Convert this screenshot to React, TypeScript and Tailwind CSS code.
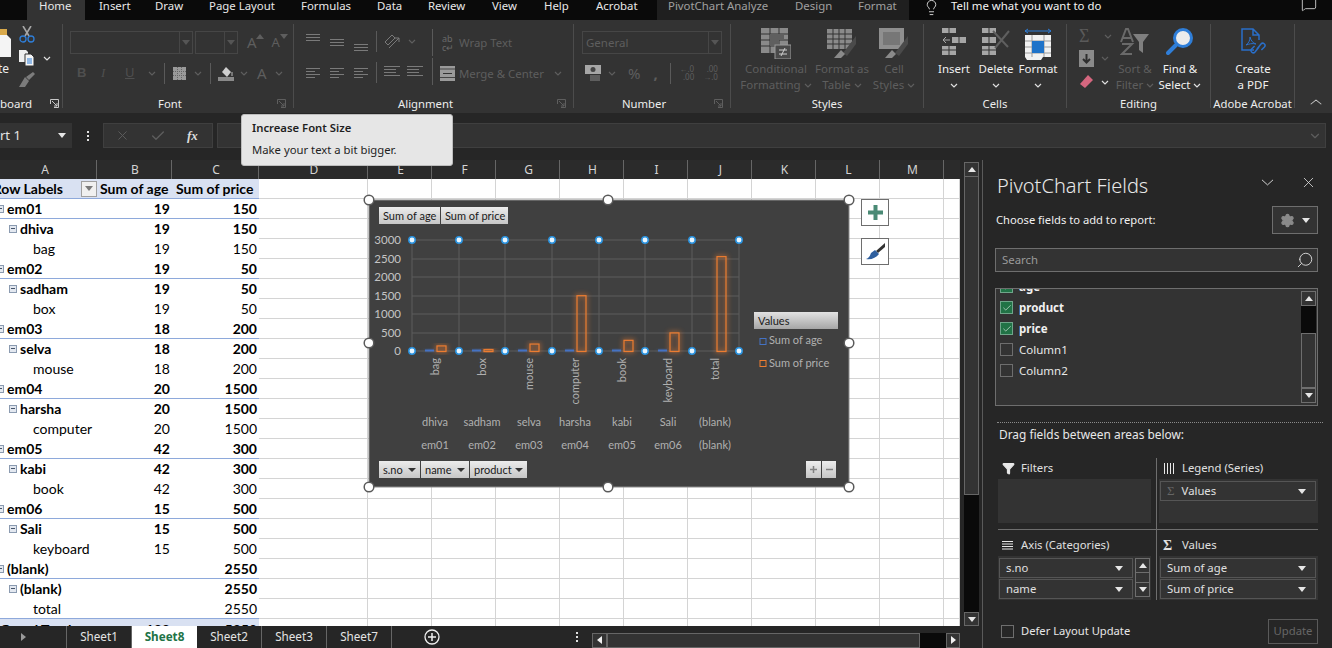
import React from "react";
import { Settings, Search, X, ChevronDown, ChevronUp, Check, Funnel, MessageSquare, Lightbulb } from "lucide-react";

const UI = "font-['Noto_Sans',sans-serif]";
const CELL = "font-['Lato',sans-serif]";
const OFF = "#5e5e5e";
const ICON = "#7a7a7a";

const Chev = ({ c = OFF, className = "" }: { c?: string; className?: string }) => (
  <svg width="8" height="5" viewBox="0 0 8 5" className={className}>
    <path d="M1 1l3 3 3-3" fill="none" stroke={c} strokeWidth="1.2" />
  </svg>
);

const Tri = ({ c = "#e6e6e6", up = false, className = "" }: { c?: string; up?: boolean; className?: string }) => (
  <svg width="8" height="5" viewBox="0 0 8 5" className={className}>
    <path d={up ? "M0 5L4 0l4 5z" : "M0 0l4 5 4-5z"} fill={c} />
  </svg>
);

const Launcher = ({ c = OFF }: { c?: string }) => (
  <svg width="9" height="9" viewBox="0 0 9 9">
    <path d="M.5 5V.5H8.5V8.5H4M2 2l5 5M7 4v3H4" fill="none" stroke={c} strokeWidth="1" />
  </svg>
);

const Lines = ({ widths, w = 14, gap = 3 }: { widths: number[]; w?: number; gap?: number }) => (
  <svg width={w} height={widths.length * gap + 1}>
    {widths.map((x, i) => (
      <rect key={i} x={0} y={i * gap} width={x} height="1" fill={ICON} />
    ))}
  </svg>
);

const Sep = ({ h = 21, className = "" }: { h?: number; className?: string }) => (
  <div className={`w-px bg-[#5a5a5a] ${className}`} style={{ height: h }} />
);

const Group = ({
  w,
  label,
  launcher,
  children,
  border = true,
}: {
  w: number;
  label: string;
  launcher?: boolean;
  children: React.ReactNode;
  border?: boolean;
}) => (
  <div className={`h-[84px] flex flex-col shrink-0 ${border ? "border-r border-[#4c4c4c]" : ""}`} style={{ width: w }}>
    <div className="h-[72px] relative">{children}</div>
    <div className="h-[12px] flex items-start">
      <div className="flex-1 text-center text-[11.3px] leading-[16px] text-[#ededed] whitespace-nowrap">{label}</div>
      {launcher && (
        <div className="w-[16px] pt-[3px]">
          <Launcher />
        </div>
      )}
    </div>
  </div>
);

const Big = ({
  w,
  icon,
  lines,
  on = false,
  chev = false,
  chevBelow = false,
}: {
  w: number;
  icon: React.ReactNode;
  lines: string[];
  on?: boolean;
  chev?: boolean;
  chevBelow?: boolean;
}) => (
  <div className="flex flex-col items-center pt-[4px] shrink-0" style={{ width: w }}>
    <div className="h-[33px] flex items-start justify-center">{icon}</div>
    {lines.map((l, i) => (
      <div
        key={l}
        className={`text-[11.5px] leading-[16px] whitespace-nowrap flex items-center gap-[3px] ${on ? "text-[#f0f0f0]" : "text-[#5e5e5e]"}`}
      >
        {l}
        {chev && i === lines.length - 1 && <Chev c={on ? "#e0e0e0" : OFF} />}
      </div>
    ))}
    {chevBelow && (
      <div className="h-[16px] flex items-center">
        <Chev c="#e0e0e0" />
      </div>
    )}
  </div>
);

const CondIcon = () => (
  <svg width="30" height="31" viewBox="0 0 30 31">
    <rect x="0" y="0" width="27" height="25" fill="#8a8a8a" />
    <path d="M0 6h27M0 12h27M0 18h27M9 0v25M18 0v25" stroke="#333" />
    <rect x="9" y="6" width="14" height="6" fill="#5f5f5f" />
    <rect x="9" y="12" width="9" height="6" fill="#5f5f5f" />
    <rect x="14" y="17" width="16" height="14" fill="#4a4a4a" stroke="#9a9a9a" />
    <path d="M18 22h8M18 26h8M24 20l-4 8" stroke="#cfcfcf" />
  </svg>
);

const TableIcon = () => (
  <svg width="30" height="30" viewBox="0 0 30 30">
    <rect x="0" y="1" width="25" height="20" fill="#8a8a8a" />
    <path d="M0 6h25M0 11h25M0 16h25M6 1v20M12 1v20M18 1v20" stroke="#333" />
    <path d="M29 8v8l-9 12-4-3z" fill="#4a4a4a" />
    <path d="M14 22l4 4-4 4h-7z" fill="#8a8a8a" />
  </svg>
);

const CellIcon = () => (
  <svg width="30" height="30" viewBox="0 0 30 30">
    <rect x="0" y="0" width="25" height="21" fill="#8f8f8f" />
    <rect x="4" y="4" width="17" height="13" fill="#777" />
    <path d="M29 8v8l-9 12-4-3z" fill="#4a4a4a" />
    <path d="M13 22l4 4-4 4h-7z" fill="#8a8a8a" />
  </svg>
);

const InsertIcon = () => (
  <svg width="26" height="27" viewBox="0 0 26 27">
    <path d="M1 0h14v5H1zM11 9h14v6H11zM1 18h14v9H1z" fill="#a6a6a6" />
    <path d="M8 0v5M18 9v6M8 18v9M1 22h14" stroke="#333" />
    <path d="M2 12h7M2 12l3-3M2 12l3 3" stroke="#a6a6a6" fill="none" />
  </svg>
);

const DeleteIcon = () => (
  <svg width="30" height="27" viewBox="0 0 30 27">
    <path d="M1 0h14v5H1zM1 9h14v6H1zM1 18h14v9H1z" fill="#a6a6a6" />
    <path d="M8 0v5M8 9v6M8 18v9M1 22h14" stroke="#333" />
    <path d="M12 3l15 16M28 3L14 20" stroke="#5f5f5f" strokeWidth="2" />
  </svg>
);

const FormatIcon = () => (
  <svg width="28" height="33" viewBox="0 0 28 33">
    <path d="M1 3h26M1 3l3-2M1 3l3 2M27 3l-3-2M27 3l-3 2" stroke="#2f7ed8" fill="none" />
    <rect x="1" y="7" width="26" height="22" fill="#f2f2f2" />
    <path d="M1 13h26M1 19h26M1 25h26M8 7v22M20 7v22" stroke="#9a9a9a" />
    <rect x="8" y="13" width="12" height="12" fill="#1f73c9" />
    <path d="M1 29h18l-2 3H3z" fill="#f2f2f2" />
  </svg>
);

const SortIcon = () => (
  <svg width="30" height="28" viewBox="0 0 30 28">
    <path d="M1 14L6 1h2l5 13M3 10h8" stroke="#6a6a6a" strokeWidth="2" fill="none" />
    <path d="M2 16h10L2 26h10" stroke="#6a6a6a" strokeWidth="2" fill="none" />
    <path d="M13 6h16l-6 8v11l-4-3v-8z" fill="#7f7f7f" />
  </svg>
);

const FindIcon = () => (
  <svg width="28" height="28" viewBox="0 0 28 28">
    <circle cx="17" cy="10" r="8.5" fill="#ececec" stroke="#2f7ed8" strokeWidth="3" />
    <path d="M10 17L2 25" stroke="#2f7ed8" strokeWidth="4" strokeLinecap="round" />
  </svg>
);

const PdfIcon = () => (
  <svg width="26" height="28" viewBox="0 0 26 28" fill="none" stroke="#2a6fc9" strokeWidth="1.5">
    <path d="M14 22H2V1h11l6 6v5M13 1v6h6" />
    <path d="M6 17c3-2 4-5 4-8 1 4 3 6 6 7-4-1-7 0-10 1z" strokeWidth="1" />
    <path d="M17 21l4-5a2.2 2.2 0 0 1 3.4 3l-3 3M19 19l-4 5a2.2 2.2 0 0 1-3.4-3l3-3" />
  </svg>
);

const tabs: [string, number][] = [
  ["Insert", 56],
  ["Draw", 54],
  ["Page Layout", 92],
  ["Formulas", 76],
  ["Data", 51],
  ["Review", 64],
  ["View", 52],
  ["Help", 52],
  ["Acrobat", 60],
];

const TabStrip = () => (
  <div className="h-[20px] bg-[#0a0a0a] flex text-[11.4px] leading-[12px] text-[#e8e8e8] overflow-hidden shrink-0">
    <div className="w-[27px]" />
    <div className="w-[58px] h-[20px] bg-[#333333] pl-[12px]">Home</div>
    <div className="w-[14px]" />
    {tabs.map(([t, w]) => (
      <div key={t} className="whitespace-nowrap" style={{ width: w }}>
        {t}
      </div>
    ))}
    <div className="w-[1px]" />
    <div className="w-[252px] bg-[#1f1f1f] flex text-[#a0a0a0] pl-[11px]">
      <span className="w-[127px] whitespace-nowrap">PivotChart Analyze</span>
      <span className="w-[63px]">Design</span>
      <span>Format</span>
    </div>
    <div className="pl-[14px] pr-[11px]">
      <Lightbulb size={17} strokeWidth={1.2} color="#f0f0f0" className="-mt-[1px]" />
    </div>
    <span className="whitespace-nowrap text-[#f4f4f4]">Tell me what you want to do</span>
    <div className="ml-auto pr-[15px]">
      <MessageSquare size={16} strokeWidth={1.2} color="#e8e8e8" className="-mt-[4px]" />
    </div>
  </div>
);

const Ribbon = () => (
  <div className={`h-[93px] bg-[#333333] pt-[4px] flex shrink-0 overflow-hidden`}>
    {/* clipboard */}
    <Group w={63} label="">
      <div className="flex h-full">
        <div className="w-[19px] overflow-hidden text-[12px] text-[#ededed]">
          <svg width="11" height="30" viewBox="0 0 11 30" className="mt-[5px] block">
            <rect x="0" y="0" width="7" height="7" fill="#d9a94a" />
            <path d="M0 6h7l4 4v18H0z" fill="#f4f4f4" />
          </svg>
          <div className="-ml-[17px] leading-[16px] mt-[2px] text-right w-[26px]">te</div>
        </div>
        <div className="flex flex-col pt-[2px]">
          <svg width="16" height="17" viewBox="0 0 16 17">
            <path d="M4 0l6 10M12 0L6 10" stroke="#a6a6a6" strokeWidth="1.6" />
            <circle cx="4" cy="13" r="3" fill="none" stroke="#2f7ed8" strokeWidth="1.3" />
            <circle cx="12" cy="13" r="3" fill="none" stroke="#2f7ed8" strokeWidth="1.3" />
          </svg>
          <div className="flex items-center gap-[8px] mt-[7px]">
            <svg width="16" height="16" viewBox="0 0 16 16">
              <path d="M0 0h7l2 2v10H0z" fill="#efefef" />
              <path d="M6 4h6l3 3v9H6z" fill="#f4f4f4" stroke="#333" />
              <path d="M8 9h5M8 11h5M8 13h5" stroke="#2f7ed8" />
            </svg>
            <Chev c="#e0e0e0" />
          </div>
          <svg width="16" height="15" viewBox="0 0 16 15" className="mt-[6px]">
            <path d="M16 2l-2-2-7 5 3 3zM6 5l4 4-4 6H0z" fill="#7c7c7c" />
          </svg>
        </div>
      </div>
      <div className="absolute left-0 top-[72px] text-[11.5px] leading-[16px] text-[#ededed]">board</div>
      <div className="absolute left-[50px] top-[75px]">
        <Launcher c="#c8c8c8" />
      </div>
    </Group>

    {/* font */}
    <Group w={231} label="Font" launcher>
      <div className="flex items-center mt-[7px] h-[23px] ml-[7px]">
        <div className="w-[123px] h-[23px] border border-[#464646] flex justify-end">
          <div className="w-[13px] border-l border-[#464646] flex items-center justify-center">
            <Tri c="#555" />
          </div>
        </div>
        <div className="w-[43px] h-[23px] ml-[2px] border border-[#464646] flex justify-end">
          <div className="w-[13px] border-l border-[#464646] flex items-center justify-center">
            <Tri c="#555" />
          </div>
        </div>
        <span className="ml-[9px] text-[15px] text-[#5e5e5e]">A</span>
        <Tri c="#5e5e5e" up className="-mt-[13px] -ml-[1px]" />
        <span className="ml-[8px] text-[13px] text-[#5e5e5e]">A</span>
        <Tri c="#5e5e5e" className="-mt-[13px]" />
      </div>
      <div className="flex items-center h-[22px] mt-[8px] ml-[14px] text-[13px] text-[#4f4f4f]">
        <b className="w-[24px] font-['Liberation_Sans',sans-serif]">B</b>
        <i className="w-[24px] font-['Liberation_Serif',serif]">I</i>
        <u className="w-[23px]">U</u>
        <Chev />
        <Sep className="ml-[8px]" />
        <svg width="13" height="13" className="ml-[8px]">
          <rect width="13" height="13" fill="#9a9a9a" />
          <path d="M0 4.5h13M0 8.5h13M4.5 0v13M8.5 0v13" stroke="#666" strokeDasharray="1 1" />
        </svg>
        <Chev className="ml-[8px]" />
        <Sep className="ml-[8px]" />
        <svg width="16" height="16" viewBox="0 0 16 16" className="ml-[7px]">
          <path d="M4 7l4-5 5 5-4 5z" fill="#cfcfcf" />
          <path d="M14 7v4" stroke="#777" strokeWidth="2" />
          <rect y="12" width="16" height="4" fill="#8a8a8a" />
        </svg>
        <Chev className="ml-[6px]" />
        <span className="ml-[9px] text-[#5e5e5e] text-[15px]">A</span>
        <Chev className="ml-[8px]" />
      </div>
    </Group>

    {/* alignment */}
    <Group w={280} label="Alignment" launcher>
      <div className="flex h-[66px]">
        <div className="flex flex-col ml-[12px] w-[64px]">
          <div className="flex gap-[10px] mt-[10px] h-[22px]">
            <Lines widths={[14, 14, 14]} />
            <div className="mt-[5px]">
              <Lines widths={[14, 14, 14]} />
            </div>
            <div className="mt-[10px]">
              <Lines widths={[14, 14, 14]} />
            </div>
          </div>
          <div className="flex gap-[10px] mt-[12px]">
            <Lines widths={[14, 9, 14, 9]} />
            <Lines widths={[14, 9, 14, 9]} />
            <Lines widths={[14, 9, 14, 9]} />
          </div>
        </div>
        <div className="flex flex-col ml-[6px] w-[56px]">
          <div className="flex items-center gap-[7px] mt-[7px] h-[21px]">
            <Sep />
            <svg width="17" height="16" viewBox="0 0 17 16" fill="none" stroke={ICON}>
              <path d="M1 8l7-7 3 3-7 7zM5 14L15 4M15 4h-4M15 4v4" />
            </svg>
            <Chev />
          </div>
          <div className="flex items-center gap-[7px] mt-[10px] h-[21px]">
            <Sep />
            <Lines widths={[16, 12, 12, 16]} w={16} />
            <Lines widths={[16, 12, 12, 16]} w={16} />
          </div>
        </div>
        <div className="flex flex-col text-[11.4px] text-[#5e5e5e]">
          <div className="flex items-center h-[21px] mt-[8px]">
            <Sep h={27} />
            <span className="ml-[9px] w-[17px] text-[9px] leading-[9px] text-[#6a6a6a]">
              ab
              <br />c↵
            </span>
            <span className="whitespace-nowrap">Wrap Text</span>
          </div>
          <div className="flex items-center h-[21px] mt-[10px]">
            <Sep h={27} className="-mt-[5px]" />
            <svg width="15" height="15" className="ml-[7px] mr-[4px]">
              <rect width="15" height="15" fill="#9a9a9a" />
              <path d="M0 3h15M0 11.500h15" stroke="#444" />
              <path d="M3 7.500h9" stroke="#333" />
            </svg>
            <span className="whitespace-nowrap">Merge &amp; Center</span>
            <Chev className="ml-[10px]" />
          </div>
        </div>
      </div>
    </Group>

    {/* number */}
    <Group w={157} label="Number" launcher>
      <div className="ml-[8px] mt-[7px] w-[140px] h-[23px] border border-[#464646] flex items-center text-[11.5px] text-[#5e5e5e]">
        <span className="pl-[3px] flex-1">General</span>
        <div className="w-[13px] h-full border-l border-[#464646] flex items-center justify-center">
          <Tri c="#555" />
        </div>
      </div>
      <div className="flex items-center ml-[11px] mt-[8px] h-[22px]">
        <svg width="17" height="16" viewBox="0 0 17 16">
          <rect width="16" height="9" fill="#a6a6a6" />
          <circle cx="8" cy="4.500" r="2.500" fill="#444" />
          <path d="M5 11h10M5 13h10M5 15h10" stroke="#8a8a8a" />
        </svg>
        <Chev className="ml-[6px]" />
        <span className="ml-[12px] text-[15px] text-[#5e5e5e]">%</span>
        <span className="ml-[13px] text-[15px] font-bold text-[#5e5e5e] w-[8px]">,</span>
        <Sep className="ml-[9px]" />
        <span className="ml-[8px] text-[8px] leading-[8px] text-[#5e5e5e] text-right whitespace-nowrap">
          ←.0
          <br />
          .00
        </span>
        <span className="ml-[9px] text-[8px] leading-[8px] text-[#5e5e5e] text-right whitespace-nowrap">
          .00
          <br />→.0
        </span>
      </div>
    </Group>

    {/* styles */}
    <Group w={193} label="Styles">
      <div className="flex ml-[10px]">
        <Big w={70} icon={<CondIcon />} lines={["Conditional", "Formatting"]} chev />
        <Big w={62} icon={<TableIcon />} lines={["Format as", "Table"]} chev />
        <Big w={42} icon={<CellIcon />} lines={["Cell", "Styles"]} chev />
      </div>
    </Group>

    {/* cells */}
    <Group w={143} label="Cells">
      <div className="flex ml-[9px]">
        <Big w={42} on chevBelow icon={<InsertIcon />} lines={["Insert"]} />
        <Big w={42} on chevBelow icon={<DeleteIcon />} lines={["Delete"]} />
        <Big w={42} on chevBelow icon={<FormatIcon />} lines={["Format"]} />
      </div>
    </Group>

    {/* editing */}
    <Group w={144} label="Editing">
      <div className="flex">
        <div className="flex flex-col ml-[12px] w-[33px] pt-[3px]">
          <div className="flex items-center gap-[9px] h-[18px] text-[18px] text-[#5a5a5a] font-['Liberation_Serif',serif]">
            <span className="w-[16px]">Σ</span>
            <Chev />
          </div>
          <div className="flex items-center gap-[7px] mt-[4px] h-[18px]">
            <svg width="15" height="17">
              <rect width="15" height="17" fill="#8a8a8a" />
              <path d="M7.500 4v8M4 9l3.500 3.500L11 9" stroke="#2e2e2e" strokeWidth="2" fill="none" />
            </svg>
            <Chev />
          </div>
          <div className="flex items-center gap-[8px] mt-[7px] h-[16px]">
            <svg width="14" height="14" viewBox="0 0 14 14">
              <path d="M9 0l5 5-8 8-5-4z" fill="#d5677f" />
            </svg>
            <Chev c="#e0e0e0" />
          </div>
        </div>
        <Big w={46} icon={<SortIcon />} lines={["Sort &", "Filter"]} chev />
        <Big w={44} on icon={<FindIcon />} lines={["Find &", "Select"]} chev />
      </div>
    </Group>

    {/* acrobat */}
    <Group w={84} label="Adobe Acrobat">
      <Big w={84} on icon={<PdfIcon />} lines={["Create", "a PDF"]} />
    </Group>
    <div className="flex-1 flex justify-end items-end pb-[2px] pr-[8px] h-[88px]">
      <ChevronUp size={16} strokeWidth={1.2} color="#c8c8c8" className="scale-x-125" />
    </div>
  </div>
);

const FormulaBar = () => (
  <div className="h-[47px] bg-[#262626] pt-[10px] flex shrink-0 text-[12px]">
    <div className="w-[72px] h-[25px] bg-[#333333] flex items-center overflow-hidden text-[#e4e4e4] text-[13px] pr-[6px] justify-between">
      <span className="whitespace-nowrap">rt 1</span>
      <Tri />
    </div>
    <div className="ml-[12px] w-[8px] h-[25px] flex flex-col justify-center items-center gap-[2px]">
      <span className="w-[2px] h-[2px] bg-[#e0e0e0]" />
      <span className="w-[2px] h-[2px] bg-[#e0e0e0]" />
      <span className="w-[2px] h-[2px] bg-[#e0e0e0]" />
    </div>
    <div className="ml-[11px] w-[110px] h-[25px] bg-[#333333] border border-[#3f3f3f] flex items-center">
      <X size={15} strokeWidth={1.5} color="#5e5e5e" className="ml-[11px]" />
      <Check size={16} strokeWidth={2} color="#5e5e5e" className="ml-[20px]" />
      <i className="ml-[21px] font-['Liberation_Serif',serif] font-bold text-[#dcdcdc] text-[13px]">fx</i>
    </div>
    <div className="ml-[4px] w-[1109px] h-[25px] bg-[#333333] border border-[#3f3f3f] flex items-center justify-end pr-[3px]">
      <ChevronDown size={14} color="#5e5e5e" />
    </div>
  </div>
);

const WIDTHS = [109, 64, 64, 64, 64, 64, 64, 64, 64, 64, 16];

const Empties = () => (
  <>
    {WIDTHS.map((w, i) => (
      <div key={i} className="h-full border-r border-b border-[#d4d4d4] bg-white shrink-0" style={{ width: w }} />
    ))}
  </>
);

type Row = [string, number, number | null, number];

const rows: Row[] = [
  ["em01", 0, 19, 150],
  ["dhiva", 1, 19, 150],
  ["bag", 2, 19, 150],
  ["em02", 0, 19, 50],
  ["sadham", 1, 19, 50],
  ["box", 2, 19, 50],
  ["em03", 0, 18, 200],
  ["selva", 1, 18, 200],
  ["mouse", 2, 18, 200],
  ["em04", 0, 20, 1500],
  ["harsha", 1, 20, 1500],
  ["computer", 2, 20, 1500],
  ["em05", 0, 42, 300],
  ["kabi", 1, 42, 300],
  ["book", 2, 42, 300],
  ["em06", 0, 15, 500],
  ["Sali", 1, 15, 500],
  ["keyboard", 2, 15, 500],
  ["(blank)", 0, null, 2550],
  ["(blank)", 1, null, 2550],
  ["total", 2, null, 2550],
];

const Minus = ({ className = "" }: { className?: string }) => (
  <div className={`w-[8px] h-[8px] bg-[#e3e8f0] border border-[#8a9ab0] flex items-center justify-center shrink-0 ${className}`}>
    <span className="w-[4px] h-px bg-[#44546a]" />
  </div>
);

const PivotRow = ({ row }: { row: Row }) => {
  const [label, level, age, price] = row;
  const bold = level < 2 ? "font-bold" : "";
  return (
    <div className="h-[20px] flex shrink-0">
      <div
        className={`w-[259px] flex items-center bg-white text-black text-[14px] border-b ${bold} ${
          level === 0 || level === 2 && label === "total" ? "border-[#8ea9db]" : "border-transparent"
        }`}
      >
        <div className="w-[97px] flex items-center whitespace-nowrap">
          {level === 0 && <Minus className="-ml-[4px] mr-[3px]" />}
          {level === 1 && <Minus className="ml-[9px] mr-[3px]" />}
          {level === 2 && <span className="ml-[33px]" />}
          {label}
        </div>
        <div className="w-[73px] text-right">{age}</div>
        <div className="w-[87px] text-right">{price}</div>
      </div>
      <Empties />
    </div>
  );
};

const Handle = ({ x, y }: { x: number; y: number }) => (
  <circle cx={x} cy={y} r="4.800" fill="#fff" stroke="#5a5a5a" strokeWidth="1.500" />
);

const vx = [412, 459, 505, 552, 599, 645, 692, 739];
const bars = [150, 50, 200, 1500, 300, 500, 2550];
const ages = [19, 19, 18, 20, 42, 15, 0];
const cx = [435, 482, 529, 575, 622, 668, 715];
const products = ["bag", "box", "mouse", "computer", "book", "keyboard", "total"];
const names = ["dhiva", "sadham", "selva", "harsha", "kabi", "Sali", "(blank)"];
const snos = ["em01", "em02", "em03", "em04", "em05", "em06", "(blank)"];
const gridY: [string, number][] = [
  ["3000", 240],
  ["2500", 259],
  ["2000", 277],
  ["1500", 296],
  ["1000", 314],
  ["500", 333],
  ["0", 351],
];
const BASE = 351.5;
const SCALE = 0.0372;

const FieldBtn = ({ x, w, y, label, drop }: { x: number; w: number; y: number; label: string; drop?: boolean }) => (
  <g>
    <rect x={x} y={y} width={w} height={17} fill="url(#btn)" />
    <text x={x + 4} y={y + 12.5} fontSize="11" fill="#1a1a1a">
      {label}
    </text>
    {drop && <path d={`M${x + w - 12} ${y + 7}h8l-4 4z`} fill="#333" />}
  </g>
);

const Chart = () => (
  <svg
    width="500"
    height="305"
    viewBox="360 190 500 305"
    className="absolute left-[360px] top-[30px] font-['Lato',sans-serif]"
  >
    <defs>
      <linearGradient id="btn" x1="0" y1="0" x2="0" y2="1">
        <stop offset="0" stopColor="#ececec" />
        <stop offset="1" stopColor="#c6c6c6" />
      </linearGradient>
      <linearGradient id="legendHead" x1="0" y1="0" x2="0" y2="1">
        <stop offset="0" stopColor="#e2e2e2" />
        <stop offset="1" stopColor="#a6a6a6" />
      </linearGradient>
      <filter id="glow" x="-100%" y="-50%" width="300%" height="200%">
        <feGaussianBlur stdDeviation="2.500" />
      </filter>
    </defs>
    <rect x="369" y="200" width="480" height="287" fill="#404040" stroke="#8c8c8c" />

    <FieldBtn x={379} w={61} y={207} label="Sum of age" />
    <FieldBtn x={441} w={67} y={207} label="Sum of price" />

    {gridY.map(([t, y]) => (
      <g key={t}>
        <line x1="412" x2="739" y1={y} y2={y} stroke="#5c5c5c" />
        <text x="401" y={y + 4} fontSize="11.500" fill="#c4c4c4" textAnchor="end">
          {t}
        </text>
      </g>
    ))}
    {vx.map((x) => (
      <line key={x} x1={x} x2={x} y1="240" y2="351" stroke="#5c5c5c" />
    ))}

    {bars.map((b, i) => {
      const h = b * SCALE;
      const x = vx[i] + 25;
      const ah = Math.max(2, ages[i] * SCALE);
      return (
        <g key={i}>
          <rect x={x} y={BASE - h} width="9" height={h} fill="none" stroke="#ed7d31" strokeWidth="3" opacity="0.55" filter="url(#glow)" />
          <rect x={x} y={BASE - h} width="9" height={h} fill="none" stroke="#ed7d31" strokeWidth="1.200" />
          {ages[i] > 0 && (
            <>
              <rect x={vx[i] + 13} y={BASE - ah} width="9" height={ah} fill="#4472c4" opacity="0.6" filter="url(#glow)" />
              <rect x={vx[i] + 13} y={BASE - ah} width="9" height={ah} fill="#4472c4" />
            </>
          )}
        </g>
      );
    })}

    {vx.map((x) => (
      <g key={x}>
        {[240, 351].map((y) => (
          <circle key={y} cx={x} cy={y} r="3.200" fill="#e9f6ff" stroke="#2a93e0" strokeWidth="1.500" />
        ))}
      </g>
    ))}

    {products.map((t, i) => (
      <text key={t} transform={`translate(${cx[i] + 4} 358) rotate(-90)`} fontSize="11" fill="#b0b0b0" textAnchor="end">
        {t}
      </text>
    ))}
    {names.map((t, i) => (
      <text key={i} x={cx[i]} y="426" fontSize="11" fill="#b0b0b0" textAnchor="middle">
        {t}
      </text>
    ))}
    {snos.map((t, i) => (
      <text key={i} x={cx[i]} y="449" fontSize="11" fill="#b0b0b0" textAnchor="middle">
        {t}
      </text>
    ))}

    <rect x="754" y="312" width="84" height="17" fill="url(#legendHead)" />
    <text x="758" y="325" fontSize="11" fill="#1a1a1a">
      Values
    </text>
    <rect x="760" y="338.500" width="6" height="6" fill="none" stroke="#4472c4" />
    <text x="769" y="344" fontSize="11" fill="#b0b0b0">
      Sum of age
    </text>
    <rect x="760" y="360.500" width="6" height="6" fill="none" stroke="#ed7d31" />
    <text x="769" y="367" fontSize="11" fill="#b0b0b0">
      Sum of price
    </text>

    <FieldBtn x={379} w={41} y={461} label="s.no" drop />
    <FieldBtn x={421} w={48} y={461} label="name" drop />
    <FieldBtn x={470} w={57} y={461} label="product" drop />

    <rect x="806" y="461" width="15" height="17" fill="url(#btn)" />
    <path d="M810 469.500h7M813.500 466v7" stroke="#808080" strokeWidth="1.500" />
    <rect x="822" y="461" width="14" height="17" fill="url(#btn)" />
    <path d="M826 469.500h7" stroke="#808080" strokeWidth="1.500" />

    <Handle x={369} y={200} />
    <Handle x={608} y={200} />
    <Handle x={849} y={200} />
    <Handle x={369} y={343} />
    <Handle x={849} y={343} />
    <Handle x={369} y={487} />
    <Handle x={608} y={487} />
    <Handle x={849} y={487} />
  </svg>
);

const ChartTools = () => (
  <>
    <div className="absolute left-[861px] top-[39px] w-[28px] h-[27px] bg-white border border-[#6e6e6e] flex items-center justify-center">
      <svg width="15" height="15" viewBox="0 0 15 15">
        <path d="M5.500 0h4v5.500H15v4H9.500V15h-4V9.500H0v-4h5.500z" fill="#4a8a75" />
      </svg>
    </div>
    <div className="absolute left-[861px] top-[78px] w-[28px] h-[27px] bg-white border border-[#6e6e6e] flex items-center justify-center">
      <svg width="19" height="18" viewBox="0 0 19 18">
        <path d="M19 0v4l-7 6-2-2z" fill="#333" />
        <path d="M9 7l4 4c-3 4-8 6-13 5 3-1 4-3 5-6z" fill="#2f5f9e" />
      </svg>
    </div>
  </>
);

const COLS: [string, number][] = [
  ["A", 97],
  ["B", 75],
  ["C", 87],
  ["D", 109],
  ["E", 64],
  ["F", 64],
  ["G", 64],
  ["H", 64],
  ["I", 64],
  ["J", 64],
  ["K", 64],
  ["L", 64],
  ["M", 64],
];

const Sheet = () => (
  <div className="w-[960px] h-[466px] relative overflow-hidden shrink-0">
    <div className="h-[19px] flex bg-[#2b2b2b] text-[12px] text-[#d4d4d4] leading-[19px] text-center">
      {COLS.map(([c, w], i) => (
        <div key={c} className={`border-r border-[#666666] shrink-0 ${i === 0 ? "pr-[6px]" : "pl-[2px]"}`} style={{ width: w }}>
          {c}
        </div>
      ))}
    </div>
    <div className={`${CELL} flex flex-col h-[447px] overflow-hidden`}>
      <div className="h-[20px] flex shrink-0">
        <div className="w-[259px] bg-[#d9e1f2] border-b border-[#8ea9db] flex items-center text-[14px] font-bold text-black">
          <div className="w-[63px] overflow-hidden flex justify-end whitespace-nowrap shrink-0">Row Labels</div>
          <div className="w-[18px] shrink-0" />
          <div className="w-[16px] h-[16px] mr-[3px] bg-[#f0f0f0] border border-[#a0a0a0] flex items-center justify-center shrink-0">
            <Tri c="#7a7a7a" />
          </div>
          <div className="w-[71px] whitespace-nowrap">Sum of age</div>
          <div className="flex-1 pl-[5px] whitespace-nowrap">Sum of price</div>
        </div>
        <Empties />
      </div>
      {rows.map((r, i) => (
        <PivotRow key={i} row={r} />
      ))}
      <div className="h-[20px] flex shrink-0">
        <div className="w-[259px] bg-[#d9e1f2] flex items-center text-[14px] font-bold text-black">
          <div className="w-[97px] whitespace-nowrap">Grand Total</div>
          <div className="w-[73px] text-right">133</div>
          <div className="w-[87px] text-right">5250</div>
        </div>
        <Empties />
      </div>
    </div>
    <Chart />
    <ChartTools />
  </div>
);

const VScroll = () => (
  <div className="w-[22px] h-[466px] bg-[#262626] pl-[4px] flex flex-col shrink-0">
    <div className="w-[15px] h-[2px]" />
    <div className="w-[15px] h-[15px] bg-[#333333] border border-[#666] flex items-center justify-center">
      <Tri up />
    </div>
    <div className="w-[15px] h-[318px] bg-[#333333] border-x border-b border-[#666]" />
    <div className="w-[15px] flex-1 bg-[#0a0a0a]" />
    <div className="w-[15px] h-[14px] bg-[#333333] border border-[#666] flex items-center justify-center">
      <Tri />
    </div>
  </div>
);

const SheetTab = ({ name, on }: { name: string; on?: boolean }) => (
  <div
    className={`h-[22px] w-[65px] flex items-center justify-center shrink-0 ${
      on ? "bg-white text-[#217346] font-bold" : "text-[#e4e4e4] border-r border-[#666]"
    }`}
  >
    {name}
  </div>
);

const BottomBar = () => (
  <div className="h-[22px] bg-[#262626] flex items-center text-[11.7px] shrink-0">
    <div className="w-[67px] h-[22px] border-r border-[#666] flex items-center pl-[21px]">
      <svg width="5" height="8">
        <path d="M0 0l5 4-5 4z" fill="#9a9a9a" />
      </svg>
    </div>
    <SheetTab name="Sheet1" />
    <SheetTab name="Sheet8" on />
    <SheetTab name="Sheet2" />
    <SheetTab name="Sheet3" />
    <SheetTab name="Sheet7" />
    <svg width="16" height="16" viewBox="0 0 16 16" className="ml-[32px]">
      <circle cx="8" cy="8" r="7" fill="none" stroke="#f0f0f0" strokeWidth="1.300" />
      <path d="M8 4v8M4 8h8" stroke="#f0f0f0" strokeWidth="1.500" />
    </svg>
    <div className="ml-[136px] w-[3px] flex flex-col gap-[2px]">
      <span className="w-[2px] h-[2px] bg-[#e0e0e0]" />
      <span className="w-[2px] h-[2px] bg-[#e0e0e0]" />
      <span className="w-[2px] h-[2px] bg-[#e0e0e0]" />
    </div>
    <div className="ml-[13px] w-[368px] h-[15px] mt-[6px] flex">
      <div className="w-[15px] bg-[#333333] border border-[#666] flex items-center justify-center">
        <svg width="5" height="8">
          <path d="M5 0L0 4l5 4z" fill="#f0f0f0" />
        </svg>
      </div>
      <div className="w-[313px] bg-[#333333] border border-[#666]" />
      <div className="flex-1 bg-[#0a0a0a]" />
      <div className="w-[14px] bg-[#333333] border border-[#666] flex items-center justify-center">
        <svg width="5" height="8">
          <path d="M0 0l5 4-5 4z" fill="#f0f0f0" />
        </svg>
      </div>
    </div>
  </div>
);

const CheckBox = ({ on }: { on?: boolean }) => (
  <div
    className={`w-[13px] h-[13px] border flex items-center justify-center shrink-0 ${
      on ? "bg-[#217346] border-[#6fa58a]" : "border-[#6e6e6e]"
    }`}
  >
    {on && <Check size={10} strokeWidth={1.5} color="#e8f2ec" />}
  </div>
);

const FieldRow = ({ name, on }: { name: string; on?: boolean }) => (
  <div className="h-[21px] flex items-center gap-[6px] text-[11.5px] text-[#e8e8e8] shrink-0">
    <CheckBox on={on} />
    <span className={on ? "font-bold text-[#f0f0f0]" : ""}>{name}</span>
  </div>
);

const AreaItem = ({ label, w, icon }: { label: string; w: number; icon?: boolean }) => (
  <div
    className="h-[20px] bg-[#333333] border border-[#555555] flex items-center pl-[6px] pr-[9px] text-[11.3px] text-[#e0e0e0] shrink-0"
    style={{ width: w }}
  >
    {icon && <span className="font-['Liberation_Serif',serif] text-[#666] text-[13px] mr-[7px]">Σ</span>}
    <span className="flex-1 whitespace-nowrap">{label}</span>
    <Tri />
  </div>
);

const AreaHead = ({ icon, label }: { icon: React.ReactNode; label: string }) => (
  <div className="flex items-center h-[21px] text-[11.3px] text-[#e0e0e0]">
    <div className="w-[23px] flex justify-start pl-[4px]">{icon}</div>
    {label}
  </div>
);

const Panel = () => (
  <div className="w-[350px] h-[488px] bg-[#262626] border-l border-[#5a5a5a] pl-[12px] pr-[14px] flex flex-col shrink-0">
    <div className="flex items-start h-[46px] pt-[12px]">
      <div className="text-[20px] leading-[27px] font-light text-[#e8e8e8] pl-[2px] flex-1 whitespace-nowrap">PivotChart Fields</div>
      <ChevronDown size={19} strokeWidth={1.1} color="#e0e0e0" className="mt-[1px] mr-[23px] scale-x-110" />
      <X size={17} strokeWidth={1.1} color="#e8e8e8" className="mr-[1px] mt-[2px]" />
    </div>
    <div className="flex items-center h-[28px] justify-between">
      <span className="text-[11.2px] text-[#f0f0f0] pl-[1px] whitespace-nowrap">Choose fields to add to report:</span>
      <div className="w-[46px] h-[28px] bg-[#333333] border border-[#6e6e6e] flex items-center justify-center gap-[7px]">
        <Settings size={15} fill="#8a8a8a" color="#8a8a8a" />
        <Tri />
      </div>
    </div>
    <div className="mt-[14px] h-[24px] bg-[#333333] border border-[#6e6e6e] flex items-center justify-between px-[6px] text-[11.4px] text-[#9a9a9a]">
      Search
      <Search size={18} strokeWidth={1.2} color="#e0e0e0" className="-scale-x-100 -mr-[3px]" />
    </div>
    <div className="mt-[16px] h-[118px] bg-[#333333] border border-[#6e6e6e] flex justify-between overflow-hidden shrink-0">
      <div className="pl-[4px] flex flex-col -mt-[13px] h-[130px]">
        <div className="h-[21px] flex items-center gap-[6px] text-[11.5px] font-bold text-[#f0f0f0]">
          <CheckBox on />
          age
        </div>
        <FieldRow name="product" on />
        <FieldRow name="price" on />
        <FieldRow name="Column1" />
        <FieldRow name="Column2" />
      </div>
      <div className="w-[15px] mr-[1px] mt-[2px] flex flex-col h-[112px]">
        <div className="h-[15px] border border-[#6e6e6e] flex items-center justify-center">
          <Tri up />
        </div>
        <div className="h-[27px] bg-[#0a0a0a]" />
        <div className="h-[55px] border border-[#6e6e6e]" />
        <div className="h-[15px] border border-[#6e6e6e] flex items-center justify-center">
          <Tri />
        </div>
      </div>
    </div>
    <div className="mt-[16px] w-[326px] ml-[2px] border-t border-dotted border-[#8a8a8a]" />
    <div className="h-[25px] flex items-center text-[11.9px] text-[#e8e8e8] pl-[4px] -mt-[1px] whitespace-nowrap">
      Drag fields between areas below:
    </div>

    <div className="mt-[11px] ml-[3px] w-[320px] h-[142px] flex flex-col">
      <div className="flex h-[72px] border-b border-[#6e6e6e] shrink-0">
        <div className="w-[159px] border-r border-[#6e6e6e] pr-[5px]">
          <AreaHead label="Filters" icon={<Funnel size={13} fill="#e8e8e8" color="#e8e8e8" />} />
          <div className="h-[44px] bg-[#333333]" />
        </div>
        <div className="flex-1 pl-[2px]">
          <AreaHead
            label="Legend (Series)"
            icon={
              <svg width="10" height="11" className="ml-[1px]">
                <path d="M.5 0v11M3.500 0v11M6.500 0v11M9.500 0v11" stroke="#e8e8e8" />
              </svg>
            }
          />
          <div className="h-[44px] bg-[#333333] pt-[2px] px-[1px]">
            <AreaItem label="Values" w={156} icon />
          </div>
        </div>
      </div>
      <div className="flex flex-1">
        <div className="w-[159px] border-r border-[#6e6e6e] pr-[5px] pt-[5px]">
          <AreaHead
            label="Axis (Categories)"
            icon={
              <svg width="11" height="9">
                <path d="M0 .5h11M0 3h11M0 5.500h11M0 8h11" stroke="#e8e8e8" />
              </svg>
            }
          />
          <div className="h-[44px] bg-[#333333] flex pt-[2px] pl-[1px] gap-[2px]">
            <div className="flex flex-col gap-[1px]">
              <AreaItem label="s.no" w={134} />
              <AreaItem label="name" w={134} />
            </div>
            <div className="w-[15px] flex flex-col h-[40px]">
              <div className="h-[15px] border border-[#6e6e6e] flex items-center justify-center">
                <Tri up />
              </div>
              <div className="h-[9px] border-x border-[#6e6e6e]" />
              <div className="h-[15px] border border-[#6e6e6e] flex items-center justify-center">
                <Tri />
              </div>
            </div>
          </div>
        </div>
        <div className="flex-1 pl-[2px] pt-[5px]">
          <AreaHead
            label="Values"
            icon={<span className="font-['Liberation_Serif',serif] font-bold text-[14px] leading-[14px]">Σ</span>}
          />
          <div className="h-[44px] bg-[#333333] pt-[2px] px-[1px] flex flex-col gap-[1px]">
            <AreaItem label="Sum of age" w={156} />
            <AreaItem label="Sum of price" w={156} />
          </div>
        </div>
      </div>
    </div>

    <div className="mt-[19px] flex items-center justify-between">
      <div className="flex items-center gap-[7px] ml-[6px] text-[11.2px] text-[#e8e8e8]">
        <CheckBox />
        Defer Layout Update
      </div>
      <div className="w-[50px] h-[25px] border border-[#5a5a5a] flex items-center justify-center text-[11.3px] text-[#666666]">
        Update
      </div>
    </div>
  </div>
);

export default function App() {
  return (
    <div className={`${UI} w-[1332px] h-[648px] overflow-hidden relative bg-[#262626] flex flex-col`}>
      <TabStrip />
      <Ribbon />
      <FormulaBar />
      <div className="flex flex-1">
        <div className="w-[982px] flex flex-col shrink-0">
          <div className="flex">
            <Sheet />
            <VScroll />
          </div>
          <BottomBar />
        </div>
        <Panel />
      </div>

      {/* tooltip */}
      <div className="absolute left-[241px] top-[114px] w-[212px] h-[52px] bg-[#e6e6e6] rounded-[3px] border border-[#bdbdbd] pl-[10px] pt-[5px] text-[11.3px] text-[#1f1f1f]">
        <div className="font-semibold leading-[16px]">Increase Font Size</div>
        <div className="mt-[6px] leading-[16px] whitespace-nowrap">Make your text a bit bigger.</div>
      </div>
    </div>
  );
}
